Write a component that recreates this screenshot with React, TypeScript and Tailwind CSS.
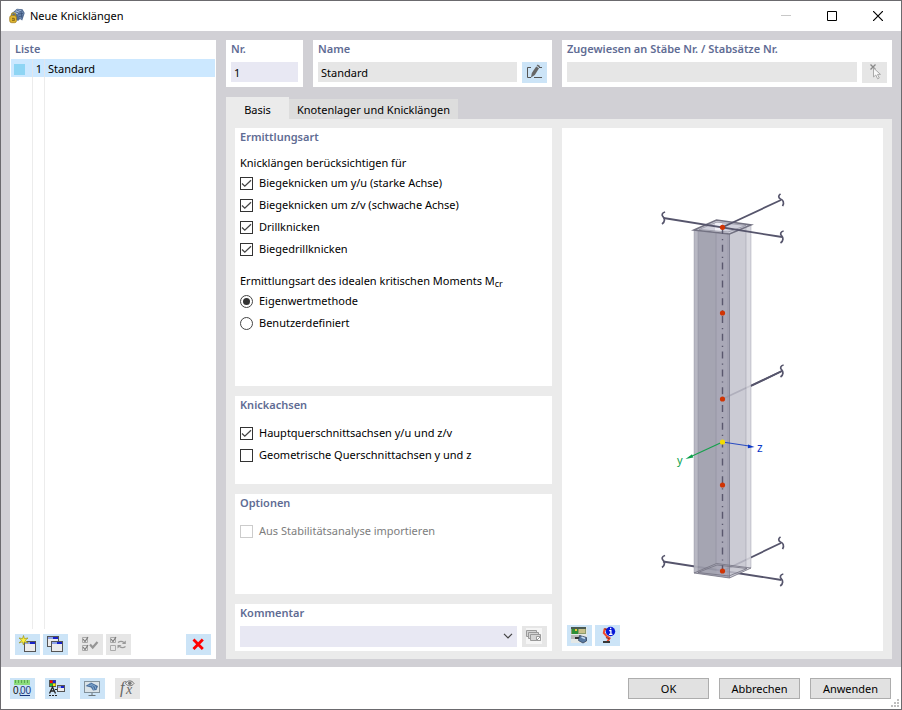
import React, { useState } from 'react';

const PANEL_TITLE = 'block h-[18px] leading-[18px] text-[11px] font-semibold text-[#5f6c94] whitespace-nowrap';

interface IconButtonProps {
  label: string;
  disabled?: boolean;
  children: React.ReactNode;
}

const IconButton: React.FC<IconButtonProps> = ({ label, disabled, children }) => (
  <button
    type="button"
    aria-label={label}
    disabled={disabled}
    className="w-[25px] h-[21px] shrink-0 bg-[#cce4f7] hover:bg-[#b8daf5] disabled:bg-[#e6e6e6]"
  >
    <svg className="block w-full h-full" viewBox="0 0 25 21" fill="none">
      {children}
    </svg>
  </button>
);

interface CheckRowProps {
  label: string;
  defaultChecked?: boolean;
  disabled?: boolean;
}

const CheckRow: React.FC<CheckRowProps> = ({ label, defaultChecked, disabled }) => (
  <label className={`flex items-center h-[22px] gap-1.5 ${disabled ? 'text-[#7d7d7d]' : ''}`}>
    <span className="relative block w-[13px] h-[13px] shrink-0">
      <input
        type="checkbox"
        defaultChecked={defaultChecked}
        disabled={disabled}
        className="peer block w-[13px] h-[13px] appearance-none border border-[#333] bg-white disabled:border-[#ccc]"
      />
      <svg
        className="absolute inset-0 hidden peer-checked:block pointer-events-none"
        viewBox="0 0 13 13"
        fill="none"
        stroke="#444"
        strokeWidth={1.3}
      >
        <path d="M2 6.5 4.8 9.2 11 3.2" />
      </svg>
    </span>
    {label}
  </label>
);

interface RadioRowProps {
  label: string;
  checked: boolean;
  onSelect: () => void;
}

const RadioRow: React.FC<RadioRowProps> = ({ label, checked, onSelect }) => (
  <label className="flex items-center h-[22px] gap-1.5">
    <span className="relative block w-[13px] h-[13px] shrink-0">
      <input
        type="radio"
        name="mcr"
        checked={checked}
        onChange={onSelect}
        className="peer block w-[13px] h-[13px] appearance-none rounded-full border border-[#444] bg-white"
      />
      <span className="absolute inset-[3px] hidden rounded-full bg-[#333] peer-checked:block pointer-events-none" />
    </span>
    {label}
  </label>
);

// small application window, used by several toolbar icons
const MiniWindow: React.FC<{ x: number; y: number; w?: number; h?: number }> = ({ x, y, w = 11, h = 10 }) => (
  <g>
    <rect x={x + 0.5} y={y + 0.5} width={w - 1} height={h - 1} fill="#ececec" stroke="#555" />
    <rect x={x + 1} y={y + 1} width={w - 2} height={2} fill="#8fa4e8" />
    <rect x={x + w / 2} y={y + 1} width={w / 2 - 1} height={2} fill="#1722c9" />
  </g>
);

const AppIcon = () => (
  <svg className="w-4 h-4" viewBox="0 0 16 16" fill="none">
    <path d="M3 5 8 0.7 13.5 1.2 15.7 5 13.2 12.5 11 11 9 13 3.5 9Z" fill="#526b91" />
    <path d="M4 5 8 1.5 12.5 2 8.5 6.2Z" fill="#a9bedb" />
    <path d="M8.5 6.2 12.5 2 14.8 5 12.6 11.6 10.6 10.2Z" fill="#6d86ad" />
    <path d="M5.5 3.5 9.8 5M7.5 2 11.3 3.5M9 6 14 5.5M10 8.5 13.5 8M12 3 13 10" stroke="#344c72" strokeWidth={0.7} />
    <path d="M2.5 8V6.8a2 2 0 0 1 4 0V8" stroke="#a48a2b" strokeWidth={1.3} />
    <rect x={0.7} y={7.5} width={6.8} height={7.2} rx={2} fill="#dfb52f" stroke="#98751a" strokeWidth={0.7} />
    <path d="M4 9.5v3M3 10.5h2.5v2H3" stroke="#826515" strokeWidth={0.8} />
  </svg>
);

const Break: React.FC<{ x: number; y: number; rotate?: number }> = ({ x, y, rotate = 0 }) => (
  <path
    transform={`translate(${x} ${y}) rotate(${rotate})`}
    d="M1.6 -6C-1.6 -5.4 -2 -3 -0.5 -1.3C1.4 0.5 1.8 3.6 -1.5 6"
    strokeWidth={1.7}
  />
);

const ColumnPreview = () => (
  <svg className="w-full max-w-[321px] flex-1 min-h-0" viewBox="0 0 321 497" fill="none">
    {/* cross beams behind the column */}
    <g stroke="#56556c" strokeWidth={1.8}>
      <path d="M101 433.5 219.5 452M160.5 443 219 415M160.5 271 220 243" />
    </g>

    {/* column body */}
    <path d="M132 102 154.5 92 189 97 189 440 167.5 450 132 445Z" fill="#c1c1cc" fillOpacity={0.84} />
    <path d="M132 102 167.5 106V450L132 445Z" fill="#777789" fillOpacity={0.46} />
    <path d="M132 102 136 102.5V445.5L132 445Z" fill="#fff" fillOpacity={0.22} />
    <path d="M154.5 105 167.5 106V450L154.5 448Z" fill="#b2b1c2" fillOpacity={0.3} />
    <path d="M184 99 189 97V440L184 442Z" fill="#fff" fillOpacity={0.3} />
    <path d="M132 102 154.5 92 189 97 167.5 106Z" fill="#d0d0dc" />
    <path d="M153 95H160V104L153 103Z" fill="#efeff7" />
    <g stroke="#828291" strokeWidth={0.8}>
      <path d="M132 102V445M136 103V445.5M154 104V436" strokeOpacity={0.45} />
      <path d="M166 106V450" strokeOpacity={0.4} />
      <path d="M167.5 106V450" stroke="#7d7d8f" />
      <path d="M184 99V442M189 97V440" strokeOpacity={0.45} />
    </g>
    <path d="M132 102 154.5 92 189 97 167.5 106Z" stroke="#737282" strokeWidth={1.6} />
    <path d="M137 101.5 155 94 184 97.5 166 104Z" stroke="#8d8c9b" strokeWidth={0.7} />
    <path
      d="M132 445 154.5 435.5 189 440 167.5 450ZM136 444.5 155 437 185 440.5 167 448Z"
      stroke="#737282"
      strokeWidth={0.8}
    />

    {/* beams in front */}
    <g stroke="#56556c" strokeWidth={1.8}>
      <path d="M101.5 90 220 109M160.5 99.3 219 72" />
      <path d="M189 258 220 243" />
      <Break x={101.5} y={90} />
      <Break x={220} y={109} />
      <Break x={219.5} y={72} rotate={-24} />
      <Break x={220} y={243} />
      <Break x={101.5} y={433.5} />
      <Break x={219.7} y={452} />
      <Break x={219.5} y={415} rotate={-24} />
    </g>

    <path d="M160.5 100V443" stroke="#5a586e" strokeWidth={1.4} strokeDasharray="7 5 1.2 4.6" strokeDashoffset={1} />

    {/* local axes */}
    <path d="M160.5 314 128 329" stroke="#16a04c" strokeWidth={1.2} />
    <path d="M123.5 331 130 326.2 131.3 329.6Z" fill="#0ba04a" />
    <path d="M160.5 314 187 318" stroke="#2a4cc0" strokeWidth={1.2} />
    <path d="M192.5 319 186 316.5 185.8 320.3Z" fill="#0b38c8" />
    <text x={115} y={336} fontSize={11} fill="#0ba04a">
      y
    </text>
    <text x={195} y={324} fontSize={12} fill="#0b38c8">
      z
    </text>

    {[99.3, 185, 271, 357, 443].map((y) => (
      <circle key={y} cx={160.5} cy={y} r={2.6} fill="#d03404" />
    ))}
    <circle cx={160.5} cy={314} r={2.6} fill="#f5dc00" />
  </svg>
);

const BUTTON =
  'w-[81px] h-[21px] border border-[#adadad] bg-[#e1e1e1] text-center leading-[19px] hover:border-[#0078d7] hover:bg-[#e5f1fb]';

export default function App() {
  const [method, setMethod] = useState('eigen');

  return (
    <div className="flex min-h-screen flex-col border border-[#6b6a6e] bg-white font-['Noto_Sans','Open_Sans',sans-serif] text-[11px] leading-[18px] text-black">
      {/* title bar */}
      <header className="flex h-[30px] shrink-0 items-center pl-2">
        <AppIcon />
        <h1 className="ml-[5px] flex-1">Neue Knicklängen</h1>
        <button type="button" aria-label="Minimieren" disabled className="flex h-full w-[46px] items-center justify-center">
          <svg className="h-2.5 w-2.5" viewBox="0 0 10 10">
            <path d="M0 4.5h10" stroke="#c8c8c8" />
          </svg>
        </button>
        <button type="button" aria-label="Maximieren" className="flex h-full w-[46px] items-center justify-center">
          <svg className="h-2.5 w-2.5" viewBox="0 0 10 10" fill="none">
            <path d="M.5 .5h9v9h-9z" stroke="#000" />
          </svg>
        </button>
        <button type="button" aria-label="Schließen" className="flex h-full w-[46px] items-center justify-center">
          <svg className="h-2.5 w-2.5" viewBox="0 0 10 10">
            <path d="M0 0 10 10M10 0 0 10" stroke="#000" strokeWidth={1.2} />
          </svg>
        </button>
      </header>

      <main className="flex flex-1 gap-2.5 bg-[#d1d0d5] px-[9px] pt-[9px] pb-2">
        {/* list of entries */}
        <section className="flex w-[206px] shrink-0 flex-col bg-white">
          <h2 className={`${PANEL_TITLE} px-[5px]`}>Liste</h2>
          <ul className="mx-px mt-px">
            <li className="grid h-[18px] grid-cols-[22px_12px_1fr] bg-[#cce8ff] leading-5">
              <span className="flex items-center border-r border-[#e2e6ec] pl-[3px]">
                <span className="h-[11px] w-[11px] bg-[#8ed5f4]" />
              </span>
              <span className="border-r border-[#e2e6ec] pr-0.5 text-right">1</span>
              <span className="pl-[3px]">Standard</span>
            </li>
          </ul>
          <div className="mx-px grid flex-1 grid-cols-[22px_12px_1fr]">
            <span className="border-r border-[#ececec]" />
            <span className="border-r border-[#ececec]" />
          </div>
          <div className="flex gap-[3px] px-[5px] pt-[5px] pb-1">
            <IconButton label="Neu">
              <MiniWindow x={9} y={7} w={12} h={11} />
              <path
                d="M8.5 1.5 9.4 4.6 13 4 10.3 6.2 13 9 9.4 7.8 8.5 11 7.4 7.8 4 9 6.6 6.2 4 4 7.5 4.6Z"
                fill="#fff23b"
                stroke="#9d9720"
                strokeWidth={0.7}
              />
            </IconButton>
            <IconButton label="Kopieren">
              <MiniWindow x={4} y={2} w={12} h={11} />
              <MiniWindow x={8} y={7} w={12} h={11} />
            </IconButton>
            <span className="w-1" />
            <IconButton label="Alle auswählen" disabled>
              <path d="M4.5 3.5h5v5h-5zM4.5 11.5h5v5h-5z" stroke="#aaa" />
              <path d="M5 5 7 7.5 10 3M5 13 7 15.5 10 11" stroke="#777" strokeWidth={1.1} />
              <path d="M12 10.5 14.7 13.5 19.5 8" stroke="#959595" strokeWidth={2.2} />
            </IconButton>
            <IconButton label="Auswahl umkehren" disabled>
              <path d="M4.5 3.5h5v5h-5zM4.5 11.5h5v5h-5z" stroke="#aaa" />
              <path d="M5 5 7 7.5 10 3" stroke="#777" strokeWidth={1.1} />
              <path d="M12 8.5c2-1.6 4-1.6 6 0M19.5 12.5c-2 1.6-4 1.6-6 0" stroke="#999" strokeWidth={1.3} />
              <path d="M19.8 6.5v3.6h-4zM11.5 14.5v-3.6h4z" fill="#999" />
            </IconButton>
            <span className="flex-1" />
            <IconButton label="Löschen">
              <path d="M7.5 5.5 16.8 15M16.8 5.5 7.5 15" stroke="#f00" strokeWidth={2.8} />
            </IconButton>
          </div>
        </section>

        <div className="flex min-w-0 flex-1 flex-col">
          <div className="flex gap-2.5">
            <section className="w-[77px] shrink-0 bg-white px-[5px] pb-1">
              <label htmlFor="nr" className={PANEL_TITLE}>
                Nr.
              </label>
              <input id="nr" defaultValue="1" className="mt-1 block h-5 w-full bg-[#e8e8f3] px-[3px]" />
            </section>
            <section className="w-[239px] shrink-0 bg-white px-[5px] pb-1">
              <label htmlFor="name" className={PANEL_TITLE}>
                Name
              </label>
              <div className="mt-1 flex gap-[5px]">
                <input id="name" defaultValue="Standard" readOnly className="h-5 min-w-0 flex-1 bg-[#e6e6e6] px-[3px]" />
                <IconButton label="Name bearbeiten">
                  <path d="M9 5.5H5.5V15.5H9M12 15.5h8M17 5.5h3" stroke="#555" />
                  <path d="M9 15.5 9.8 11 14.2 4.5 17 6.3 12.8 13Z" fill="#666" />
                  <path d="M14.7 3.8 15.6 2.5 18 4 17.4 5.5Z" fill="#666" />
                </IconButton>
              </div>
            </section>
            <section className="min-w-0 flex-1 bg-white px-[5px] pb-1">
              <label htmlFor="assigned" className={PANEL_TITLE}>
                Zugewiesen an Stäbe Nr. / Stabsätze Nr.
              </label>
              <div className="mt-1 flex gap-[5px]">
                <input id="assigned" disabled className="h-5 min-w-0 flex-1 bg-[#e6e6e6] px-[3px]" />
                <IconButton label="Auswählen" disabled>
                  <path d="M8.5 2.5 13.5 7.5M13.5 2.5 8.5 7.5" stroke="#888" strokeWidth={1.3} />
                  <path d="M11.5 6v9l2.3-2 1.8 3.8 1.7-.8-1.8-3.6h3Z" fill="#f8f8f8" stroke="#aaa" />
                </IconButton>
              </div>
            </section>
          </div>

          {/* tabs */}
          <div role="tablist" className="mt-2.5 flex h-[22px] items-start">
            <button type="button" role="tab" aria-selected="true" className="h-[22px] w-[63px] bg-[#ebebeb] pt-1">
              Basis
            </button>
            <button type="button" role="tab" aria-selected="false" className="mt-0.5 h-5 w-[169px] bg-[#dddddd] pt-0.5 text-center whitespace-nowrap">
              Knotenlager und Knicklängen
            </button>
          </div>

          <div className="flex flex-1 gap-2.5 bg-[#ebebeb] px-[9px] pt-[9px] pb-2">
            <div className="flex w-[317px] shrink-0 flex-col gap-2.5">
              <section className="flex-1 bg-white px-[5px] pb-5">
                <h2 className={PANEL_TITLE}>Ermittlungsart</h2>
                <p className="mt-2">Knicklängen berücksichtigen für</p>
                <CheckRow label="Biegeknicken um y/u (starke Achse)" defaultChecked />
                <CheckRow label="Biegeknicken um z/v (schwache Achse)" defaultChecked />
                <CheckRow label="Drillknicken" defaultChecked />
                <CheckRow label="Biegedrillknicken" defaultChecked />
                <p className="mt-3">
                  Ermittlungsart des idealen kritischen Moments M<sub className="text-[9px]">cr</sub>
                </p>
                <RadioRow label="Eigenwertmethode" checked={method === 'eigen'} onSelect={() => setMethod('eigen')} />
                <RadioRow label="Benutzerdefiniert" checked={method === 'user'} onSelect={() => setMethod('user')} />
              </section>

              <section className="bg-white px-[5px] pb-[18px]">
                <h2 className={`${PANEL_TITLE} mb-2`}>Knickachsen</h2>
                <CheckRow label="Hauptquerschnittsachsen y/u und z/v" defaultChecked />
                <CheckRow label="Geometrische Querschnittachsen y und z" />
              </section>

              <section className="bg-white px-[5px] pb-[52px]">
                <h2 className={`${PANEL_TITLE} mb-2`}>Optionen</h2>
                <CheckRow label="Aus Stabilitätsanalyse importieren" disabled />
              </section>

              <section className="bg-white px-[5px] pb-1">
                <label htmlFor="comment" className={PANEL_TITLE}>
                  Kommentar
                </label>
                <div className="mt-1 flex gap-[5px]">
                  <div className="relative flex-1">
                    <select id="comment" className="block h-[21px] w-full appearance-none bg-[#e8e8f3] px-1">
                      <option value="" />
                    </select>
                    <svg className="pointer-events-none absolute top-[7px] right-1 h-[6px] w-[10px]" viewBox="0 0 10 6" fill="none">
                      <path d="M1 .8 5 4.8 9 .8" stroke="#444" strokeWidth={1.2} />
                    </svg>
                  </div>
                  <IconButton label="Kommentare" disabled>
                    <path d="M4 2h16v16H4z" fill="#f5f5f5" />
                    <g fill="#d4d4d4" stroke="#999">
                      <path d="M4.5 4.5h10v6h-10z" />
                      <path d="M6.5 6.5h10v6h-10z" />
                      <path d="M8.5 8.5h10v6h-10z" />
                    </g>
                    <path d="M14.5 10.5h4v4h-4z" fill="#fff" stroke="#999" />
                    <path d="M15 14 18 11" stroke="#999" />
                  </IconButton>
                </div>
              </section>
            </div>

            {/* preview */}
            <section className="flex min-w-0 flex-1 flex-col items-center bg-white">
              <ColumnPreview />
              <div className="flex gap-[3px] self-stretch px-[5px] pb-[5px]">
                <IconButton label="Bild speichern">
                  <path d="M4 2h16v16H4z" fill="#e4e8e6" />
                  <path d="M4 2h15v7H4z" fill="#8d9c6c" />
                  <path d="M4 2h15v2H4z" fill="#4a5a52" />
                  <path d="M5 4h6v5H5z" fill="#2e8f36" />
                  <path d="M8 4h2v2H8z" fill="#f1c33b" />
                  <path d="M12 4h6v4h-6z" fill="#c9c18b" />
                  <path d="M4 10h10v4H4z" fill="#b9b9b9" />
                  <path d="M8 12h6v2H8z" fill="#333" />
                  <path d="M12.5 10.5 19.5 12.5V16L16 18 11.5 15.5Z" fill="#587aa2" stroke="#31415c" strokeWidth={0.8} />
                  <path d="M14.5 12 18 13.5" stroke="#c5dcf5" strokeWidth={1.4} />
                </IconButton>
                <IconButton label="Info">
                  <path d="M13 4.5H9.5L8.8 8l2.8 3 3 2.2-2.2 3.3" stroke="#f04a2c" strokeWidth={2} />
                  <path d="M9.5 3.5 12 5M11 12.5l3.5 1.5" stroke="#8f2a20" strokeWidth={1.2} />
                  <path d="M8 16h7v2H8z" fill="#383838" />
                  <circle cx={15.5} cy={6.5} r={4.7} fill="#0717d8" />
                  <path d="M14.2 5.7h1.7v3.6M14 9.4h3.5M15 3.5h1.3" stroke="#fff" strokeWidth={1.3} />
                </IconButton>
              </div>
            </section>
          </div>
        </div>
      </main>

      <footer className="relative flex h-[42px] shrink-0 items-center gap-2.5 px-[9px]">
        <IconButton label="Einheiten und Dezimalstellen">
          <path d="M4 2h16v5H4z" fill="#8bdc7b" />
          <path d="M5.5 2v3M8.5 2v3M11.5 2v3M14.5 2v3M17.5 2v3" stroke="#4c9947" strokeWidth={0.8} />
          <text x={3} y={16} fontSize={10} fill="#111" fontFamily="Liberation Sans, sans-serif">
            0,
          </text>
          <text x={10} y={16} fontSize={10} fill="#16357c" fontFamily="Liberation Sans, sans-serif">
            00
          </text>
          <path d="M10 17.5h10" stroke="#16357c" />
        </IconButton>
        <IconButton label="Anzeigeeigenschaften">
          <path d="M4 2h7v7H4z" fill="#555" />
          <path d="M5 2.5h2.5v2.5H5z" fill="#f00" />
          <path d="M8 2.5h2.5v2.5H8z" fill="#1722e0" />
          <path d="M5 5.5h2.5V8H5z" fill="#24c52c" />
          <path d="M8 5.5h2.5V8H8z" fill="#ffe900" />
          <path d="M4.5 15.5 7.5 9 10.5 15.5M5.5 13h4" stroke="#222" strokeWidth={1.3} />
          <path d="M4 17.5h2M7 17.5h2M10 17.5h2M10 11.5h2" stroke="#222" />
          <MiniWindow x={12} y={7} w={8} h={7} />
        </IconButton>
        <IconButton label="Ansicht">
          <rect x={4.5} y={3.5} width={15} height={11} fill="#dae3e8" stroke="#82929c" />
          <path d="M5.5 8 11 4.5 18 8 16.5 12 13 12.5 11 9.5Z" fill="#496f9e" />
          <path d="M8 7 12.5 8 14 12M9.5 5.5 15 8 16 11" stroke="#8bb4d8" strokeWidth={0.8} />
          <path d="M12 15v2.5M8.5 17.5h7" stroke="#6b7478" />
        </IconButton>
        <IconButton label="Formel" disabled>
          <text x={5} y={15} fontSize={16} fontStyle="italic" fontFamily="Liberation Serif, serif" fill="#666">
            f
          </text>
          <text x={11} y={16} fontSize={14} fontStyle="italic" fontFamily="Liberation Serif, serif" fill="#666">
            x
          </text>
          <path d="M10.5 5.5C12.5 2 17 2 19 5.5C17 8.5 12.5 8.5 10.5 5.5Z" stroke="#777" />
          <circle cx={14.8} cy={5.3} r={1.8} fill="#777" />
        </IconButton>
        <div className="flex flex-1 justify-end gap-2.5 pr-px">
          <button type="submit" className={BUTTON}>
            OK
          </button>
          <button type="button" className={BUTTON}>
            Abbrechen
          </button>
          <button type="button" className={BUTTON}>
            Anwenden
          </button>
        </div>
        <svg className="absolute right-0.5 bottom-0.5 h-2 w-2" viewBox="0 0 8 8" fill="#bfbfbf">
          <path d="M6 0h2v2H6zM3 3h2v2H3zM6 3h2v2H6zM0 6h2v2H0zM3 6h2v2H3zM6 6h2v2H6z" />
        </svg>
      </footer>
    </div>
  );
}
